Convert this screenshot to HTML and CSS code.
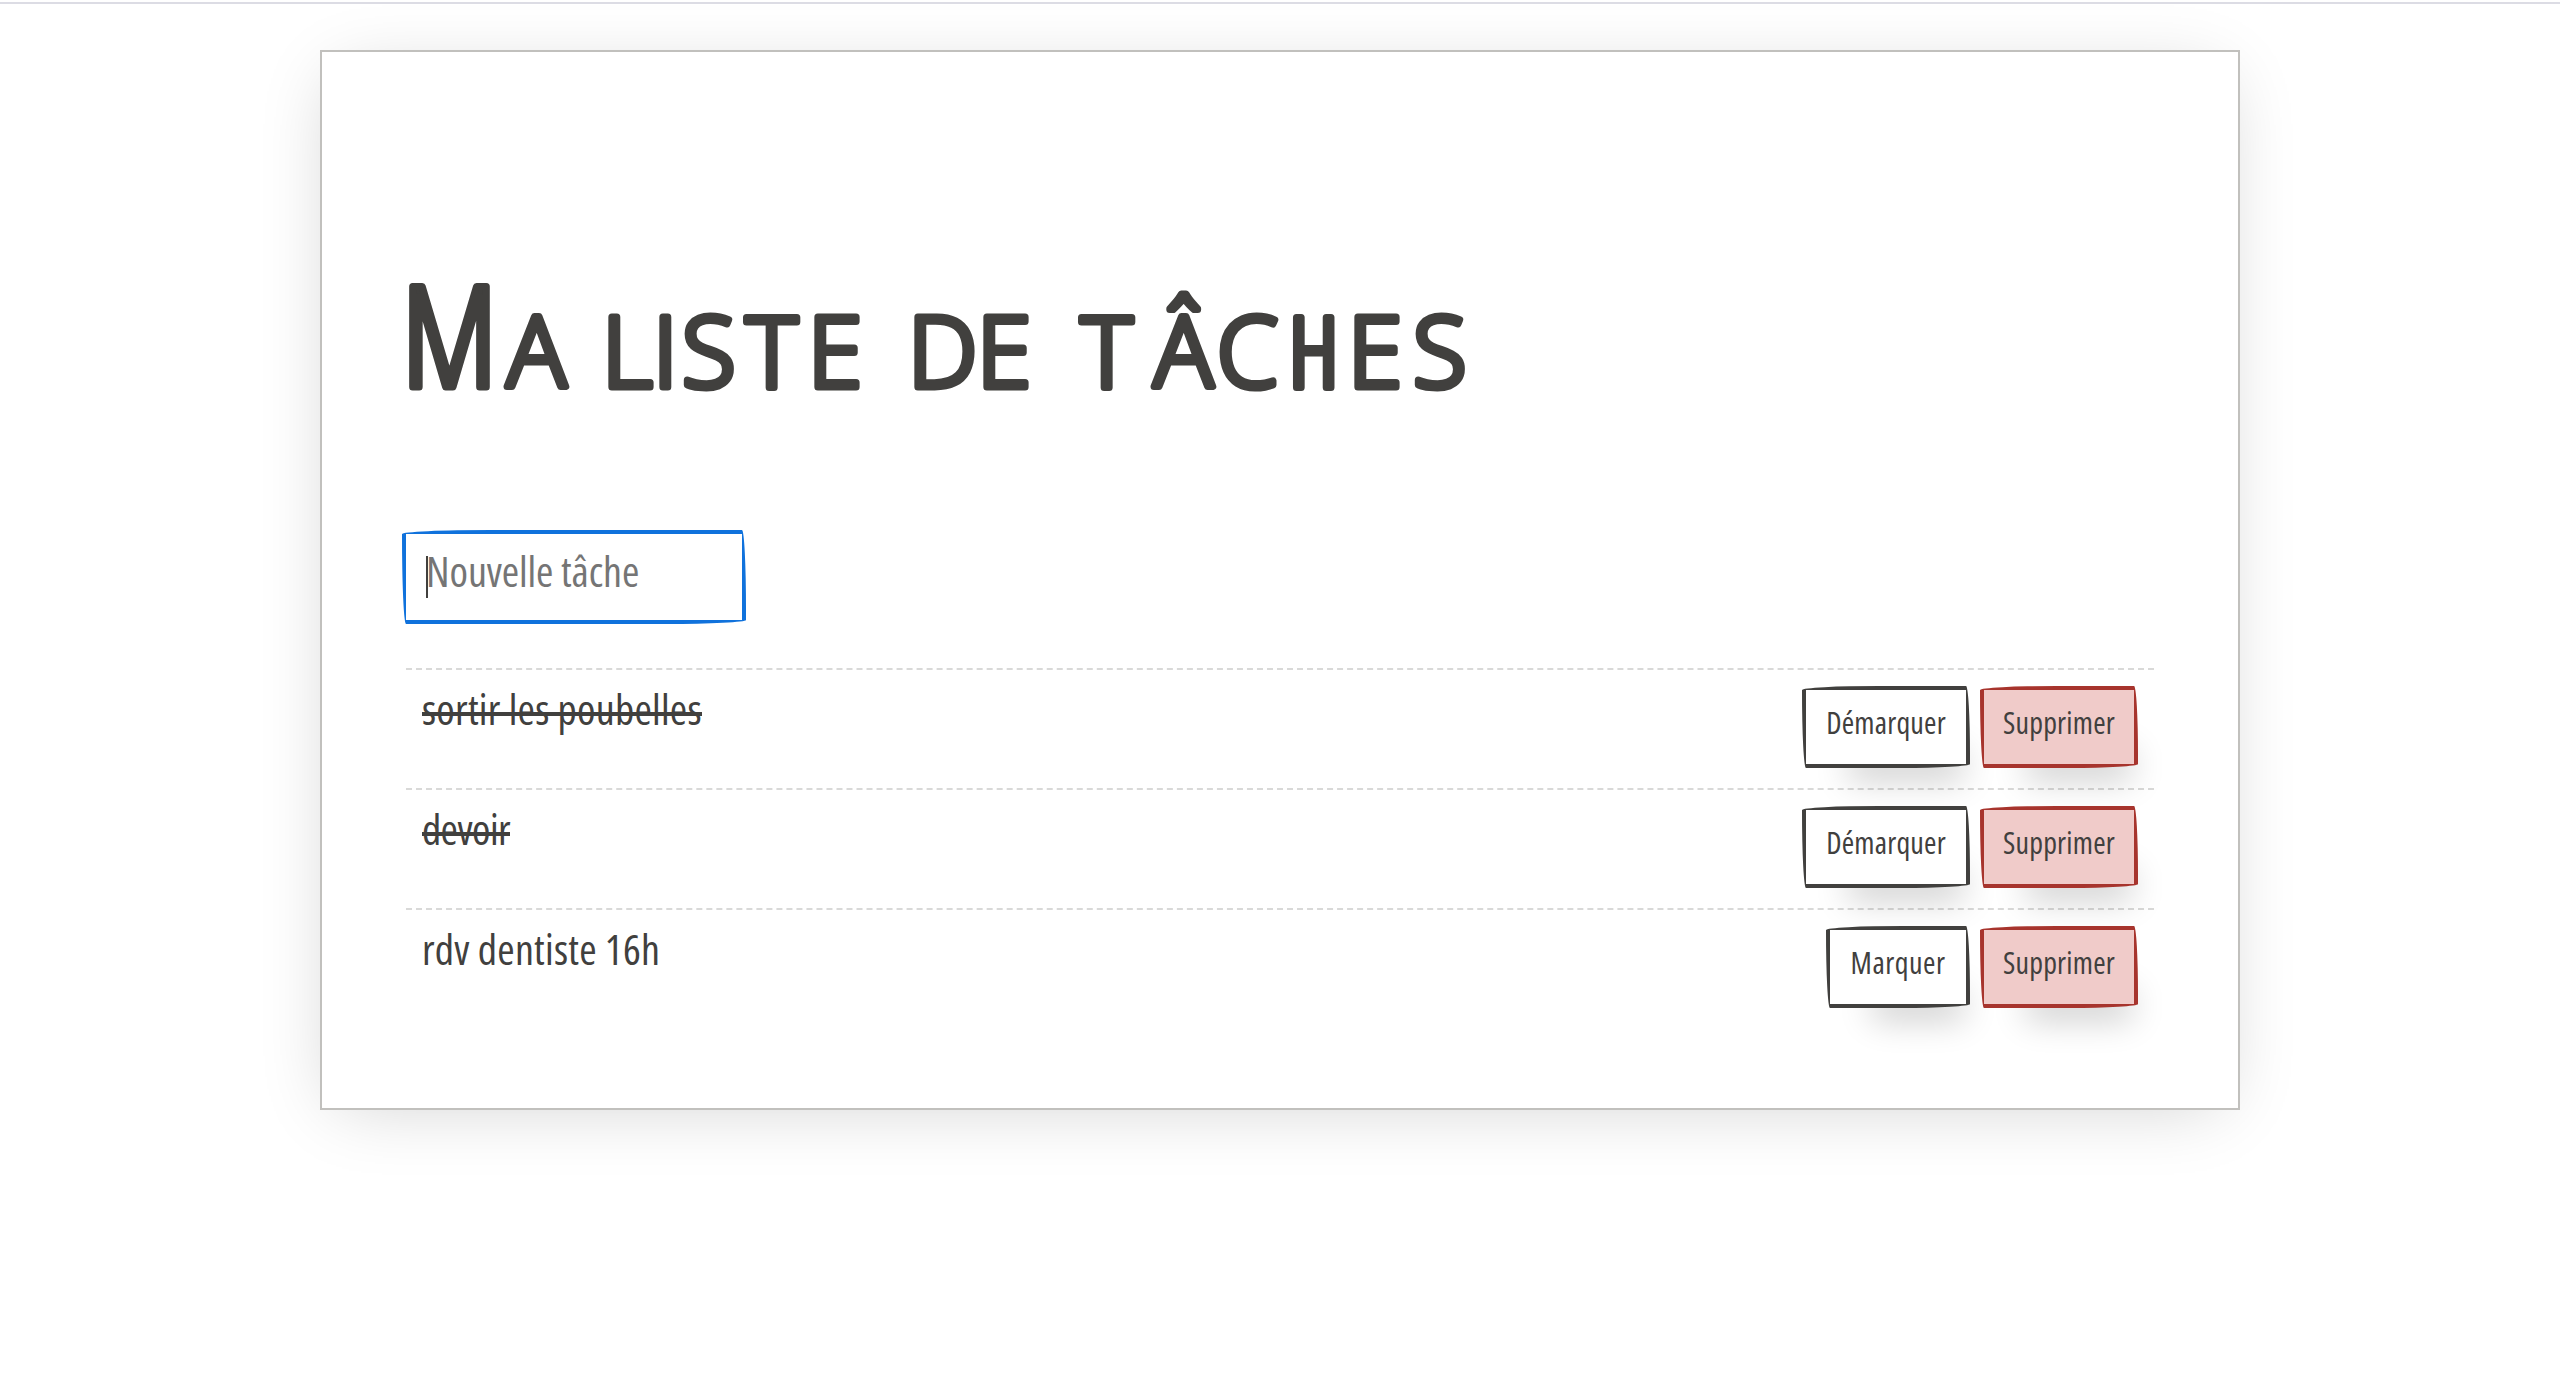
FILE: index.html
```
<!DOCTYPE html>
<html lang="fr">
<head>
<meta charset="utf-8">
<title>Ma liste de tâches</title>
<link rel="stylesheet" href="styles.css">
</head>
<body>
<div class="topline"></div>
<main class="paper">
  <h1 class="title">
    <svg class="title-art" width="1100" height="180" viewBox="0 0 1100 180">
      <text class="title-text" y="146.5" x="-4 101 166 196 247 276 340 402 472 502 571 640 675 748 811 883 942 1007"><tspan class="narrow">M</tspan><tspan class="semi">a</tspan> liste <tspan class="semi">d</tspan>e t<tspan class="semi">â</tspan>c<tspan class="narrow">h</tspan>es</text>
    </svg>
  </h1>
  <div class="field"><span class="caret"></span><span class="placeholder">Nouvelle tâche</span></div>
  <ul class="tasks">
    <li class="task">
      <span class="label done">sortir les poubelles</span>
      <div class="actions"><button class="btn">Démarquer</button><button class="btn danger">Supprimer</button></div>
    </li>
    <li class="task">
      <span class="label done short">devoir</span>
      <div class="actions"><button class="btn">Démarquer</button><button class="btn danger">Supprimer</button></div>
    </li>
    <li class="task">
      <span class="label">rdv dentiste 16h</span>
      <div class="actions"><button class="btn marquer">Marquer</button><button class="btn danger">Supprimer</button></div>
    </li>
  </ul>
</main>
</body>
</html>
```
FILE: styles.css
```
* { box-sizing: border-box; }
body {
  margin: 0;
  min-height: 1382px;
  background: #fff;
  color: #41403e;
  font-family: "Open Sans", sans-serif;
  font-stretch: 75%;
}
.topline { height: 4px; border-bottom: 2px solid #dcdce4; }
.paper {
  width: 1920px;
  height: 1060px;
  margin: 46px auto 0;
  padding: 188px 84px 0;
  background: #fff;
  border: 2px solid #c1c0bd;
  box-shadow: -2px 10px 70px -18px rgba(0, 0, 0, .2);
}
.title { margin: 0; height: 290px; }
.title-art { display: block; overflow: visible; }
.title-text {
  font-size: 140px;
  font-weight: 300;
  font-stretch: 100%;
  font-variant: small-caps;
  fill: #41403e;
  stroke: #41403e;
  stroke-width: 7px;
  stroke-linejoin: round;
}
.narrow { font-stretch: 75%; }
.semi { font-stretch: 94%; }
.field {
  display: flex;
  width: 344px;
  height: 94px;
  margin-left: -4px;
  padding: 7px 20px;
  border: 4px solid #1072dc;
  border-radius: 89px 4px 79px 4px / 4px 79px 4px 89px;
  font-size: 42px;
  line-height: 60px;
  white-space: nowrap;
}
.caret { width: 2px; height: 42px; margin: 15px -2px 0 0; background: #41403e; }
.placeholder { color: #757575; letter-spacing: -.1px; }
.tasks { list-style: none; margin: 44px 0 0; padding: 0; }
.task {
  display: flex;
  justify-content: space-between;
  align-items: flex-start;
  height: 120px;
  padding: 16px;
  border-top: 2px dashed #d9d9d8;
}
.label { font-size: 42px; line-height: 46px; letter-spacing: .25px; }
.done { background: linear-gradient(#41403e, #41403e) 0 26px / 100% 4px no-repeat; }
.short { letter-spacing: -.6px; }
.actions { display: flex; gap: 10px; }
.btn {
  width: 168px;
  height: 82px;
  padding: 0 0 8px;
  border: 4px solid #41403e;
  border-radius: 77px 4px 68px 4px / 4px 68px 4px 77px;
  background: #fff;
  box-shadow: 20px 38px 34px -26px rgba(0, 0, 0, .2);
  color: #41403e;
  font-family: inherit;
  font-stretch: inherit;
  font-size: 30px;
  line-height: 64px;
  letter-spacing: .2px;
}
.marquer { width: 144px; letter-spacing: .5px; }
.danger { width: 158px; background: #f0cbc9; border-color: #a7342d; }
```
